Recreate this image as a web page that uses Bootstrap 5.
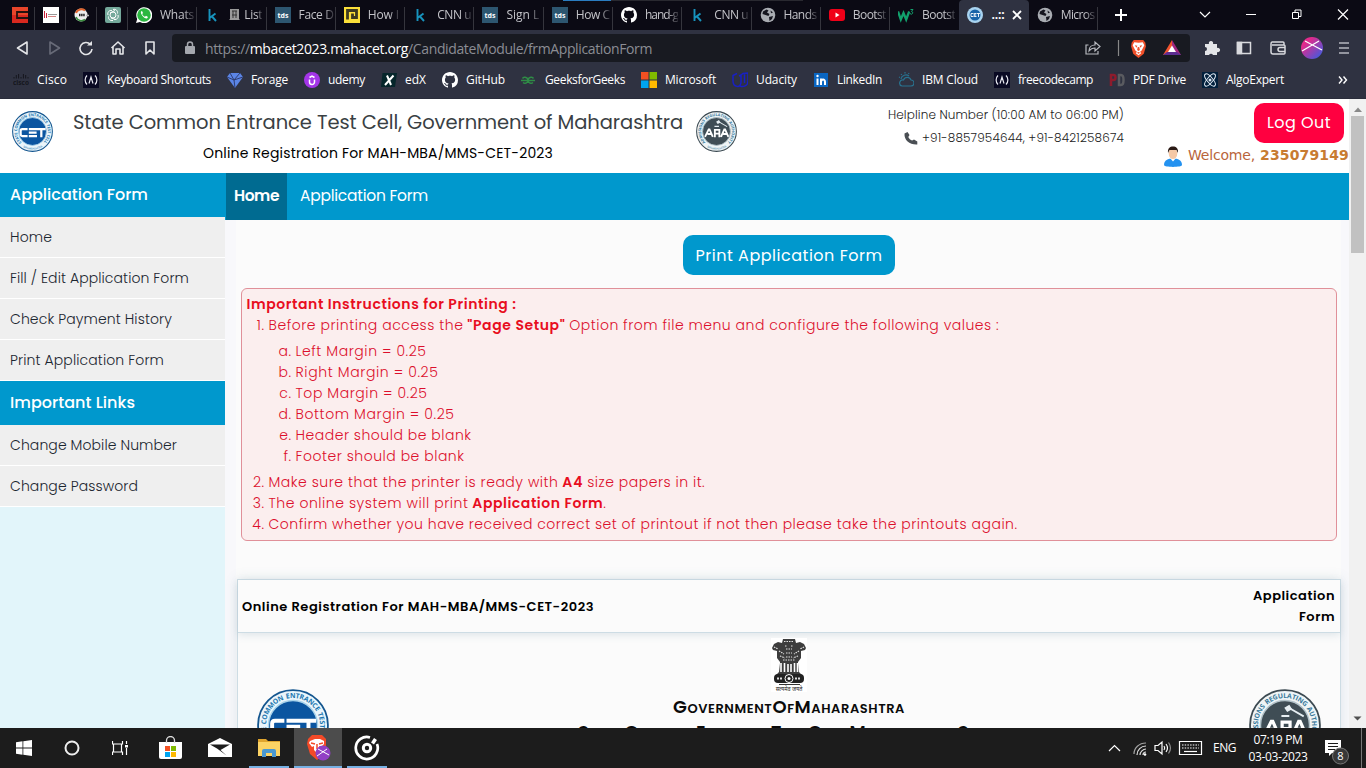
<!DOCTYPE html>
<html lang="en">
<head>
<meta charset="utf-8">
<title>MAH-MBA/MMS-CET-2023</title>
<link href="https://cdn.jsdelivr.net/npm/bootstrap@5.3.0/dist/css/bootstrap.min.css" rel="stylesheet">
<script src="https://cdn.jsdelivr.net/npm/bootstrap@5.3.0/dist/js/bootstrap.bundle.min.js"></script>
<style>
:root{--sky:#0098cd;--pop:Poppins,Inter,"Open Sans",sans-serif;--sys:"Segoe UI","Open Sans","Noto Sans",sans-serif}
body{width:1366px;height:768px;overflow:hidden;font-family:var(--pop);color:#000;background:#fff}
svg{display:block;flex:none}
[data-w]{display:inline-block;white-space:nowrap}
.browser{font-family:var(--sys);color:#fff;font-size:12px;background:#2f3241}
.tabstrip{height:30px;background:#0b0a14;padding-left:4px;position:relative}
.loadbar{position:absolute;top:0;left:563px;width:240px;height:1px;background:linear-gradient(90deg,#2a7cc0 20%,#292930 20%)}
.pin{width:31px;padding:7px 0 0 8px}
.pin,.tab{height:30px;position:relative}
.tab{flex:1 1 0;min-width:0;padding:7px 2px 0 8px;color:#c3c3c8}
.pin::after,.tab::after{content:"";position:absolute;right:0;top:7px;bottom:0;width:1px;background:#35353d}
.tab.on::after,.tab.pre::after{display:none}
.tab span{white-space:nowrap;line-height:16px;-webkit-mask-image:linear-gradient(90deg,#000 70%,rgba(0,0,0,.2) 100%)}
.tab.on{background:#2f3241;border-radius:4px 4px 0 0;color:#fff}
.tab.on span{-webkit-mask-image:none}
.tabs-box{width:1094px}
.toolbar{height:36px;padding:4px 0 4px 15px}
.urlbox{width:1018px;height:28px;background:#181a21;border-radius:4px;font-size:14px;color:#8b8d94;padding:0 9px 0 12px}
.urlbox b{color:#fff;font-weight:400}
.marks{height:32px;padding:0 18px 4px 13px}
.marks .bm{line-height:16px;color:#fff;font-size:12px}
.edge{height:1px;background:#2a2d3b}
.viewport-area{height:629px;overflow:hidden}
.page{width:1349px;height:629px;overflow:hidden}
.rail{width:17px;background:#f1f1f1;padding:6px 2px 5px 2px}
.thumb{height:137px;background:#c1c1c1;width:13px}
.masthead{height:74px;background:#fff}
.ttl{font-size:19.5px;line-height:28px;color:#3a3f44}
.sub{font-size:14px;line-height:22px}
.help{font-size:12px;color:#222;line-height:23px;font-weight:300}
.btn-out{background:#ff0040;color:#fff;border-radius:10px;width:90px;height:40px;font-size:16px;padding:0}
.hello{font-family:Verdana,"DejaVu Sans",sans-serif;font-size:14px;color:#b9653b;line-height:19px;margin-top:3px}
.hello b{color:#c87b31}
.side{width:225px;background:#e2f5fa}
.side h6{height:44px;background:var(--sky);color:#fff;font-size:16px;font-weight:500;margin:0;padding:0 10px}
.side a{height:41px;background:#efefef;border-bottom:1px solid #fff;color:#1b2630;text-decoration:none;font-size:14px;font-weight:300;padding:1px 10px 0}
.topnav{height:47px;background:var(--sky);color:#fff;font-size:15.5px;padding-bottom:1px}
.topnav .cur{width:61px;margin:0 0 -1px 1px;background:#006b91;font-weight:600;padding:0 0 1px 8px}
.pane{background:#f8f8fb;padding:0 8px 0 11px}
.sheet{background:#fbfbfb;height:100%}
.btn-print{background:var(--sky);color:#fff;border-radius:10px;width:212px;height:40px;font-size:16px;padding:2px 0 0 1px}
.notes{margin:13px 4px 0 5px;height:253px;border:1px solid #e09099;border-radius:6px;background:#fbeeee;color:#dc0f2c;font-size:14px;line-height:21px;font-weight:300;padding:4.5px 4.500px}
.notes b{font-weight:600;color:#e80d1e}
.notes ol{margin:0;padding-left:22px}
.notes ol ol{list-style:none;padding-left:27px;margin:5px 0;counter-reset:sub}
.notes>ol{list-style:none;counter-reset:top}
.notes li{position:relative}
.notes li::before{position:absolute;right:100%;margin-right:4px;letter-spacing:.5px}
.notes>ol>li::before{counter-increment:top;content:counter(top) "."}
.notes ol ol li::before{counter-increment:sub;content:counter(sub,lower-alpha) "."}
.formcard{margin:38px 0 0 1px;height:200px;border:1px solid #cddce4;box-shadow:0 0 12px rgba(90,130,150,.16)}
.formhead{height:53px;border-bottom:1px solid #cddce4;box-shadow:0 2px 8px rgba(90,130,150,.18);font-size:13px;font-weight:600;line-height:21px;padding:0 5px 0 4px}
.caps{font-variant:small-caps;font-weight:600;font-size:18px;line-height:24px;color:#0a0a0a}
.taskbar{height:40px;background:#1c1c1c;color:#fff;font-family:var(--sys);font-size:12px}
.task{width:48px;height:40px;border-bottom:2px solid transparent;padding-top:2px}
.task.app{width:49px}
.run-a{width:40px;border-color:#76b0e3}
.live{width:48px;background:#4c4c4c;border-color:#76b0e3;margin:0 5px}
.clock{line-height:17px;width:60px}
</style>
</head>
<body class="d-flex flex-column">
<svg width="0" height="0" class="position-absolute">
<defs>
<symbol id="k" viewBox="0 0 16 16"><path d="M4.500 2V14M10.500 6.500 4.500 11M7 9.500 11 14" fill="none" stroke="#1793bd" stroke-width="1.900"/></symbol>
<symbol id="tds" viewBox="0 0 16 16"><path fill="#2d5670" d="M0 0h16v16H0z"/><text x="8" y="10.500" font-size="7" font-weight="700" fill="#fff" text-anchor="middle" font-family="Open Sans">tds</text></symbol>
<symbol id="gh" viewBox="0 0 16 16"><path fill="#fff" d="M8 0C3.580 0 0 3.580 0 8c0 3.540 2.290 6.530 5.470 7.590.4.070.55-.17.55-.38 0-.19-.01-.82-.01-1.490-2.010.37-2.530-.49-2.690-.94-.09-.23-.48-.94-.82-1.130-.28-.15-.68-.52-.01-.53.63-.01 1.080.58 1.230.82.72 1.210 1.870.87 2.330.66.07-.52.28-.87.51-1.070-1.780-.2-3.640-.89-3.640-3.950 0-.87.31-1.590.82-2.150-.08-.2-.36-1.020.08-2.120 0 0 .67-.21 2.200.82.64-.18 1.320-.27 2-.27s1.360.09 2 .27c1.530-1.040 2.200-.82 2.200-.82.44 1.100.16 1.920.08 2.120.51.56.82 1.270.82 2.150 0 3.070-1.870 3.750-3.650 3.950.29.25.54.73.54 1.480 0 1.070-.01 1.930-.01 2.200 0 .21.15.46.55.38A8.010 8.010 0 0 0 16 8c0-4.420-3.580-8-8-8"/></symbol>
<symbol id="globe" viewBox="0 0 16 16"><circle cx="8" cy="8" r="7.300" fill="#a9acb2"/><path fill="#15151f" d="M3 4.500 6.500 2.500l2 1-1.500 2 2.500 1.500-1 2-3-1L2.500 7zM9 10l4-1-1 3-2.500 2zM10.500 3.500l2.500 2-2 .8z"/></symbol>
<symbol id="fcc" viewBox="0 0 16 16"><path fill="#0a0a23" d="M0 0h16v16H0z"/><path d="M4 3.500C1.500 6 1.500 10 4 12.500M12 3.500c2.500 2.500 2.500 6.500 0 9M6 11.500 8 5l2 6.500" fill="none" stroke="#e8e8f0" stroke-width="1.200"/></symbol>
<symbol id="brave" viewBox="0 0 16 18"><path fill="#f0512b" d="M3.500 1h9L14.500 3.500 15 7l-2 7-5 4-5-4L1 7l.5-3.500z"/><path fill="#fff" d="M8 3.500 12 3l1.500 3L11 11l-1.500 1 1 1.500L8 15.500 5.500 13.500l1-1.500L5 11 2.500 6 4 3z"/><path fill="#f0512b" d="M4.500 6 7 6.500l-1 1.800zM11.500 6 9 6.500l1 1.800zM7.300 7.500h1.400l.6 3L8 11.300l-1.300-.8zM6.500 13 8 12.200 9.500 13 8 14z"/></symbol>
<symbol id="cet" viewBox="0 0 100 100"><circle cx="50" cy="50" r="48.500" fill="#eaf5fb" stroke="#14568f" stroke-width="2.500"/><circle cx="50" cy="50" r="34" fill="#0b55a0" stroke="#a9d3ea" stroke-width="2"/><path id="ringc" d="M23.500 76.500A37.500 37.500 0 1 1 76.500 76.500" fill="none"/><text font-family="Open Sans" font-size="9.500" font-weight="700" fill="#1c77b0" word-spacing="1"><textPath href="#ringc" textLength="176">STATE COMMON ENTRANCE TEST CELL</textPath></text><path id="ringd" d="M25 87A44.500 44.500 0 0 0 75 87" fill="none"/><text font-family="Open Sans" font-size="7" fill="#1c77b0"><textPath href="#ringd" startOffset="2">MAHARASHTRA</textPath></text><path d="M38 44H25q-4 0-4 4v9q0 4 4 4h13M61 44H41M60 52.500H41M61 61H41M61 44h21M71.500 44v20" fill="none" stroke="#fff" stroke-width="5.500"/></symbol>
<symbol id="ara" viewBox="0 0 100 100"><circle cx="50" cy="50" r="48.500" fill="#eef4f6" stroke="#3c4a52" stroke-width="2.500"/><circle cx="50" cy="50" r="34" fill="#3f4d55" stroke="#b3c3ca" stroke-width="2"/><path id="ringa" d="M23.500 76.500A37.500 37.500 0 1 1 76.500 76.500" fill="none"/><text font-family="Open Sans" font-size="9.500" font-weight="700" fill="#38789a" word-spacing="1"><textPath href="#ringa" textLength="176">ADMISSIONS REGULATING AUTHORITY</textPath></text><path id="ringb" d="M25 87A44.500 44.500 0 0 0 75 87" fill="none"/><text font-family="Open Sans" font-size="7" fill="#38789a"><textPath href="#ringb" startOffset="2">MAHARASHTRA</textPath></text><path d="m22 63 9-18h2l8 18M28 56h9M46 64V46h11v9H46M57 55v9M61 63l8-18h2l8 18M66 56h9" fill="none" stroke="#fff" stroke-width="4.500"/><path d="M45 39h11v-3H45z M49 26l7-4 4 6-7 4z" fill="#e6eef2"/><path d="m57 27 19 11" stroke="#e6eef2" stroke-width="2.500"/></symbol>
</defs></svg>

<header class="browser flex-shrink-0">
<div class="tabstrip d-flex">
<div class="loadbar"></div>
<div class="tabs-box d-flex">
<div class="pin"><svg width="16" height="16"><path fill="#e8452a" d="M0 0h16v8H0z"/><path fill="#d8281f" d="M0 8h16v8H0z"/><path fill="none" stroke="#26130f" stroke-width="1.800" d="M16 5H5v6h11"/><path d="M7 8h9" stroke="#26130f" stroke-width="0"/></svg></div>
<div class="pin"><svg width="16" height="16"><path fill="#fff" d="M0 0h16v16H0z"/><path stroke="#c8203a" d="M1.500 4v7M3.500 6v5"/><path stroke="#999" d="M5 7.500h9"/><path stroke="#c66" stroke-width=".8" d="M5 9.500h8"/></svg></div>
<div class="pin"><svg width="16" height="16"><circle cx="7" cy="8" r="6.500" fill="#eee"/><path d="M11 3.500A5.800 5.800 0 0 0 2 6" fill="none" stroke="#e0642c" stroke-width="2"/><path d="M2 10a5.800 5.800 0 0 0 9 2.500" fill="none" stroke="#3a8c3e" stroke-width="1.600"/><path d="M5 8h6" stroke="#222" stroke-width="2.500" stroke-dasharray="1.500 .6"/><path d="M12 8.500h3" stroke="#bbb" stroke-width="1.500"/></svg></div>
<div class="pin"><svg width="16" height="16"><rect width="16" height="16" rx="2" fill="#74a99b"/><g fill="none" stroke="#fff"><circle cx="8" cy="8" r="3"/><path d="M8 2.500c3-1 5 1.500 4.500 4M13 8c1 3-1.500 5-4 4.500M8 13.500c-3 .5-5-1.500-4.500-4M3 8C2 5 4.500 3 7 3.500M5 6l5-2.500M6 11l5 1.500"/></g></svg></div>
<div class="tab d-flex gap-2"><svg width="16" height="16"><path d="M0 16 1.200 12A8 8 0 1 1 4 15z" fill="#fff"/><circle cx="8" cy="8" r="6.800" fill="#2bb741"/><path d="M5 4.500c-1 2 3 7.500 6 7l1-1.500-2-1.200-1 1C7.500 9 6.500 8 6.200 7L7 6 6 4z" fill="#fff"/></svg><span data-w="34">Whats</span></div>
<div class="tab d-flex gap-2"><svg width="16" height="16"><use href="#k"/></svg><svg width="11" height="16"><path fill="#9a9a9a" d="M1 2h9v10l1 1H0l1-1z"/><path stroke="#333" d="M3 4h5M3 8h5M4 4v7M7 4v7" fill="none"/></svg><span data-w="18" style="margin-left:-4px">List</span></div>
<div class="tab d-flex gap-2"><svg width="16" height="16"><use href="#tds"/></svg><span data-w="35">Face D</span></div>
<div class="tab d-flex gap-2"><svg width="16" height="16"><path fill="#fbdf39" d="M0 0h16v16H0z"/><path fill="none" stroke="#3c3a20" stroke-width="2.800" d="M3.500 12.500v-9h9v7h-4v-4"/></svg><span data-w="31">How I</span></div>
<div class="tab d-flex gap-2"><svg width="16" height="16"><use href="#k"/></svg><span data-w="34">CNN u</span></div>
<div class="tab d-flex gap-2"><svg width="16" height="16"><use href="#tds"/></svg><span data-w="33">Sign L</span></div>
<div class="tab d-flex gap-2"><svg width="16" height="16"><use href="#tds"/></svg><span data-w="34">How C</span></div>
<div class="tab d-flex gap-2"><svg width="16" height="16"><use href="#gh"/></svg><span data-w="33">hand-g</span></div>
<div class="tab d-flex gap-2"><svg width="16" height="16"><use href="#k"/></svg><span data-w="34">CNN u</span></div>
<div class="tab d-flex gap-2"><svg width="16" height="16"><use href="#globe"/></svg><span data-w="33">Hands</span></div>
<div class="tab d-flex gap-2"><svg width="16" height="16"><rect y="2" width="16" height="12" rx="3" fill="#f00018"/><path fill="#fff" d="m6.500 5.500 4 2.500-4 2.500z"/></svg><span data-w="33">Bootst</span></div>
<div class="tab pre d-flex gap-2"><svg width="16" height="16"><path d="m0 4.500 2.800 8L5.500 6l2.700 6.500 3-8" fill="none" stroke="#12a06c" stroke-width="2.300"/><path d="M12.500 2.500h2.500l-1.500 2q2 .5 1 2t-2.500 0" stroke="#12a06c" fill="none"/></svg><span data-w="33">Bootst</span></div>
<div class="tab on d-flex gap-2"><svg width="16" height="16"><circle cx="8" cy="8" r="8" fill="#a9d4f0"/><circle cx="8" cy="8" r="5.500" fill="#1763a8"/><path d="M6.500 6.500H4v3h2.500M9.500 6.500H7.200v3h2.300M7.200 8h2M10 6.500h3M11.500 6.500v3.500" stroke="#fff" stroke-width=".9" fill="none"/></svg><span class="fw-bold" data-w="13">..::</span><svg width="10" height="16"><path d="m1 4 8 8M9 4l-8 8" stroke="#fff" stroke-width="1.800"/></svg></div>
<div class="tab d-flex gap-2"><svg width="16" height="16"><use href="#globe"/></svg><span data-w="34">Micros</span></div>
</div>
<div class="d-flex align-items-center ms-3" style="height:30px">
<svg width="252" height="30" fill="none" stroke="#fff"><path d="M1 15h12M7 9v12" stroke-width="2"/><path d="m86 12 5 5 5-5" stroke-width="1.200"/><path d="M132 14.500h10M178.500 12.500h6v6h-6zM181 12.500v-2.500h6v6.500h-2.500" /><path d="m224 9.500 10 10M234 9.500l-10 10" stroke-width="1.200"/></svg>
</div>
</div>

<div class="toolbar d-flex align-items-center">
<svg width="157" height="28" fill="none" stroke="#e4e5e8" stroke-width="1.600" stroke-linejoin="round"><path d="M12 8 2.500 14l9.500 6z"/><path d="m35 8 9.500 6-9.500 6z" stroke="#686b78"/><path d="M75.500 10.500A6 6 0 1 0 77 15"/><path d="M72 11.500h5V7z" fill="#e4e5e8" stroke="none"/><path d="m96.500 14 6.500-6 6.500 6M98 13v7h3v-5h4v5h3v-7M131 8h8v12l-4-4-4 4z"/></svg>
<div class="urlbox d-flex align-items-center">
<svg width="12" height="16" fill="#a5a8ae"><rect x="1" y="6" width="10" height="8" rx="1"/><path d="M3.500 7V4.500a2.500 2.500 0 0 1 5 0V7" fill="none" stroke="#a5a8ae" stroke-width="1.500"/></svg>
<div class="flex-grow-1" style="margin-left:9px"><span data-w="447">https://<b>mbacet2023.mahacet.org</b>/CandidateModule/frmApplicationForm</span></div>
<svg width="46" height="20" fill="none" stroke="#b7b9bf" stroke-width="1.200"><path d="M4.500 7H2v9h12v-3M5 13c0-4 3-6 6-6V4l5 4.500L11 13v-3c-3 0-4.500 1-6 3z"/><path d="M34.500 2v16" stroke="#888"/></svg>
<svg width="17" height="19"><use href="#brave"/></svg>
<svg width="18" height="16" class="ms-3"><path fill="#f0532d" d="M9 0 0 15h4.500L9 7z"/><path fill="#a0267f" d="m9 0 9 15h-4.500L9 7z"/><path fill="#5c2d91" d="M0 15h18l-4-3H4z"/><path fill="#fff" d="m9 5.500-4 6.500h8z"/></svg>
</div>
<svg width="170" height="28" fill="none" stroke="#d9dade" stroke-width="1.500"><path fill="#e4e5e8" stroke="none" d="M15 10h4a2.200 2.200 0 1 1 4 0h4v4a2.200 2.200 0 1 1 0 4v3h-4a2.200 2.200 0 0 0-4 0h-4v-4a2 2 0 0 0 0-4z"/><path d="M47.500 8.500h13v11h-13z"/><path d="M47.500 8.500h4v11h-4z" fill="#d9dade"/><path d="M94 11V9q0-1-1-1H82q-1 0-1 2v8q0 2 2 2h11q1 0 1-1v-7q0-1-1-1H82M95 13.500h-5q-2 0-2 2t2 2h5"/><g stroke-width="1.700"><path d="M149 9h10M149 14h10M149 19h10" stroke="#b5b7bf"/></g><defs><linearGradient id="av" x1="0" x2="1" y1="0" y2="1"><stop offset=".25" stop-color="#e22a8c"/><stop offset=".85" stop-color="#4f56d8"/></linearGradient></defs><circle cx="122" cy="14" r="11" fill="url(#av)" stroke="none"/><path d="m112 17 17-10M115 7l17 9" stroke="#fff" stroke-width="1.200"/></svg>
</div>

<div class="marks d-flex align-items-center gap-3">
<div class="bm d-flex gap-2"><svg width="16" height="16"><path d="M1 5v1.500M3.300 3v3.500M5.600 2v4.500M8 5v1.500M10.400 2v4.500M12.700 3v3.500M15 5v1.500" stroke="#15161d"/><text x="0" y="13" font-size="6.500" font-weight="700" fill="#15161d">cisco</text></svg><span data-w="30">Cisco</span></div>
<div class="bm d-flex gap-2"><svg width="16" height="16"><use href="#fcc"/></svg><span data-w="104">Keyboard Shortcuts</span></div>
<div class="bm d-flex gap-2"><svg width="16" height="16"><path fill="#5b85e6" d="M3 1h10l3 4-8 11L0 5z"/><path d="M0 5 7 8l9-3M7 8l1 8M3 1l4 7 6-7" stroke="#2f3d70" fill="none"/></svg><span data-w="37">Forage</span></div>
<div class="bm d-flex gap-2"><svg width="16" height="16"><circle cx="8" cy="8" r="8" fill="#a435e8"/><path d="M5.500 7.500V10a2.500 2.500 0 0 0 5 0V7.500M5.500 5.500 8 4l2.500 1.500" fill="none" stroke="#fff" stroke-width="1.500"/></svg><span data-w="37">udemy</span></div>
<div class="bm d-flex gap-2"><svg width="16" height="16"><path fill="#06262b" d="M1.500 1H16l-2 14H0z"/><path d="M6 3.500 10 13M12.500 3.500 4 13" stroke="#fff" stroke-width="2"/></svg><span data-w="21">edX</span></div>
<div class="bm d-flex gap-2"><svg width="16" height="16"><use href="#gh"/></svg><span data-w="39">GitHub</span></div>
<div class="bm d-flex gap-2"><svg width="16" height="16" fill="none" stroke="#2f8d46" stroke-width="1.500"><path d="M1.500 6.500A3 3 0 1 1 2 10.500M0 8.500h14M12.500 6.500a3 3 0 1 0-.5 4M7 6v5"/></svg><span data-w="80">GeeksforGeeks</span></div>
<div class="bm d-flex gap-2"><svg width="16" height="16"><path fill="#f25022" d="M0 0h7.500v7.500H0z"/><path fill="#7fba00" d="M8.500 0H16v7.500H8.500z"/><path fill="#00a4ef" d="M0 8.500h7.500V16H0z"/><path fill="#ffb900" d="M8.500 8.500H16V16H8.500z"/></svg><span data-w="51">Microsoft</span></div>
<div class="bm d-flex gap-2"><svg width="16" height="16" fill="none" stroke="#1820c4" stroke-width="1.500"><path d="M5 1.500 1 3.500V9c0 6 8 8 8 1V3L7 4M9 3l2-1.500L16 1v8c0 5-5 6.500-8 5M12.500 2v9"/></svg><span data-w="41">Udacity</span></div>
<div class="bm d-flex gap-2"><svg width="16" height="16"><path fill="#0a66c2" d="M1 1h14v14H1z"/><path d="M4.500 6.500V13M8 13V6.500M8 10c0-3 4-3.500 4 0v3" stroke="#fff" stroke-width="2" fill="none"/><circle cx="4.500" cy="4" r="1.200" fill="#fff"/></svg><span data-w="45">LinkedIn</span></div>
<div class="bm d-flex gap-2"><svg width="16" height="16" fill="none" stroke="#28728f" stroke-width="1.200"><path d="M4 14h9a3 3 0 0 0 0-6 4 4 0 0 0-7.500 0A3 3 0 0 0 4 14M3 7a5 5 0 0 1 8-3M1 5l1 .5M3 2l.8 1M7 0v1.500M11 1l-.5 1"/></svg><span data-w="56">IBM Cloud</span></div>
<div class="bm d-flex gap-2"><svg width="16" height="16"><use href="#fcc"/></svg><span data-w="75">freecodecamp</span></div>
<div class="bm d-flex gap-2"><svg width="16" height="16" fill="none" stroke-width="2.500"><path d="M2 14V3h2.500q2 0 2 2.500T4.500 8H2" stroke="#8e1b2c"/><path d="M10 3h2q2.500 0 2.500 5t-2.500 5h-2z" stroke="#5a5b60"/></svg><span data-w="53">PDF Drive</span></div>
<div class="bm d-flex gap-2"><svg width="16" height="16"><path fill="#02203c" d="M0 0h16v16H0z"/><g fill="none" stroke="#dfe8f2"><ellipse cx="8" cy="8" rx="7.500" ry="2.800" transform="rotate(50 8 8)"/><ellipse cx="8" cy="8" rx="7.500" ry="2.800" transform="rotate(-50 8 8)"/></g><circle cx="8" cy="8" r="1.500" fill="#dfe8f2"/></svg><span data-w="58">AlgoExpert</span></div>
<svg width="10" height="10" class="ms-auto" fill="none" stroke="#fff" stroke-width="1.400"><path d="m1 1.500 3 3.500-3 3.500M5.500 1.500l3 3.500-3 3.500"/></svg>
</div>
<div class="edge"></div>
</header>

<div class="viewport-area d-flex flex-shrink-0">
<main class="page d-flex flex-column">
<div class="masthead d-flex flex-shrink-0">
<svg width="41" height="41" style="margin:12px 20px 0 12px"><use href="#cet"/></svg>
<div class="text-center" style="width:610px;padding-top:10px"><div class="ttl"><span data-w="610">State Common Entrance Test Cell, Government of Maharashtra</span></div><div class="sub" style="margin-top:5px"><span data-w="350">Online Registration For MAH-MBA/MMS-CET-2023</span></div></div>
<svg width="41" height="41" style="margin:12px 0 0 13px"><use href="#ara"/></svg>
<div class="help text-end ms-auto pt-1"><div><span data-w="236">Helpline Number (10:00 AM to 06:00 PM)</span></div><div class="d-flex justify-content-end align-items-center"><svg width="14" height="14" class="me-1"><path fill="#4a4f54" d="M.5 2.500 3.500 1l2 3L4.300 6c.8 1.600 2.200 2.900 3.800 3.600L10 8.600l3.300 2V13.500C6 14 0 9.500.5 2.500z"/></svg><span data-w="202">+91-8857954644, +91-8421258674</span></div></div>
<div class="d-flex flex-column align-items-end" style="width:225px;padding-top:4px"><button class="btn btn-out" style="margin-right:5px"><span data-w="64">Log Out</span></button>
<div class="hello d-flex"><svg width="20" height="22" style="margin-right:5px"><path fill="#2492f0" d="M1 19c0-5 4-6.500 9-6.500s9 1.500 9 6.500c0 2.500-18 2.500-18 0z"/><path fill="#fff" d="m7 12 3 3.500 3-3.500z"/><ellipse cx="10" cy="7.500" rx="4.300" ry="5.500" fill="#f5c8a6"/><path fill="#2b1b16" d="M5 7C4.500 2 7 .5 10 .5S15.500 2 15 7l-1.500-3h-7z"/></svg><span data-w="67" style="margin-right:5px">Welcome,</span><b data-w="89">235079149</b></div></div>
</div>
<div class="d-flex flex-grow-1">
<aside class="side d-flex flex-column flex-shrink-0">
<h6 class="d-flex align-items-center"><span data-w="138">Application Form</span></h6>
<a href="#" class="d-flex align-items-center"><span data-w="42">Home</span></a>
<a href="#" class="d-flex align-items-center"><span data-w="179">Fill / Edit Application Form</span></a>
<a href="#" class="d-flex align-items-center"><span data-w="162">Check Payment History</span></a>
<a href="#" class="d-flex align-items-center"><span data-w="154">Print Application Form</span></a>
<h6 class="d-flex align-items-center"><span data-w="125">Important Links</span></h6>
<a href="#" class="d-flex align-items-center"><span data-w="167">Change Mobile Number</span></a>
<a href="#" class="d-flex align-items-center"><span data-w="128">Change Password</span></a>
</aside>
<section class="flex-grow-1 d-flex flex-column">
<nav class="topnav d-flex flex-shrink-0"><div class="cur d-flex align-items-center"><span data-w="45">Home</span></div><div class="d-flex align-items-center ps-1" style="margin-left:9px"><span data-w="128">Application Form</span></div></nav>
<div class="pane flex-grow-1"><div class="sheet">
<div class="text-center" style="padding-top:15px"><button class="btn btn-print d-block mx-auto"><span data-w="187">Print Application Form</span></button></div>
<div class="notes"><b data-w="270">Important Instructions for Printing :</b>
<ol><li><span data-w="195">Before printing access the</span> <b data-w="98">"Page Setup"</b> <span data-w="430">Option from file menu and configure the following values :</span>
<ol><li><span data-w="131">Left Margin = 0.25</span></li><li><span data-w="143">Right Margin = 0.25</span></li><li><span data-w="132">Top Margin = 0.25</span></li><li><span data-w="159">Bottom Margin = 0.25</span></li><li><span data-w="176">Header should be blank</span></li><li><span data-w="169">Footer should be blank</span></li></ol></li>
<li><span data-w="290">Make sure that the printer is ready with</span> <b data-w="21">A4</b> <span data-w="118">size papers in it.</span></li>
<li><span data-w="200">The online system will print</span> <b data-w="131">Application Form</b>.</li>
<li><span data-w="749">Confirm whether you have received correct set of printout if not then please take the printouts again.</span></li></ol></div>
<div class="formcard"><div class="formhead d-flex justify-content-between align-items-center"><span data-w="352">Online Registration For MAH-MBA/MMS-CET-2023</span><div class="text-end"><span data-w="82">Application</span><br><span data-w="36">Form</span></div></div>
<div class="d-flex justify-content-between" style="padding:0 19px">
<svg width="72" height="72" style="margin-top:56px"><use href="#cet"/></svg>
<div class="text-center" style="padding-top:5px">
<svg width="36" height="54" viewBox="0 0 36 54" class="mx-auto"><path fill="#fff" d="M0 0h36v54H0z"/><path fill="#3d3d3d" d="M12 1h12l1 4 4-1 4 2 2 4-1 2-4 1v7l-3 4v1l1 9 3 3H5l3-3 1-9v-1l-3-4v-7l-4-1-1-2 2-4 4-2 4 1z"/><path d="M13 3.500h10M14 8h2M20 8h2M15 11h6M3 9l4 2M33 9l-4 2M8 13l5 3M28 13l-5 3M9 18l5 2M27 18l-5 2M15 15h6M15 19h6M12 22h12" stroke="#e2e2e2" stroke-width="1.200" stroke-dasharray="1.500 1"/><path d="M10 25v9M13.500 25v9M17 26v8M20 26v8M23.500 25v9M26.500 25v9" stroke="#fff" stroke-width="1.600"/><rect x="3" y="36" width="30" height="9" rx="4" fill="#222"/><circle cx="18" cy="40.500" r="4" fill="#222" stroke="#fff"/><circle cx="18" cy="40.500" r="1.500" fill="#fff"/><path d="M6 40.500h6M24 40.500h6" stroke="#ddd" stroke-width="2" stroke-dasharray="2 1"/><path d="M8 46.500h21" stroke="#333"/><text x="18" y="53" font-size="5.500" fill="#222" text-anchor="middle" font-family="Noto Sans Devanagari,Noto Sans">सत्यमेव जयते</text></svg>
<div class="caps" style="margin-top:3px"><span data-w="232">GovernmentOfMaharashtra</span></div>
<div class="caps" style="margin-top:1px"><span data-w="422">State Common Entrance Test Cell, Maharashtra State</span></div>
</div>
<svg width="72" height="72" style="margin-top:56px"><use href="#ara"/></svg>
</div></div>
</div></div>
</section>
</div>
</main>
<div class="rail d-flex flex-column"><svg width="13" height="11"><path fill="#8a8a8a" d="m3 7 4-4.500L11 7z"/></svg><div class="thumb"></div><svg width="13" height="8" class="mt-auto"><path fill="#505050" d="m2.500 1.500 4 4 4-4z"/></svg></div>
</div>

<footer class="taskbar d-flex flex-shrink-0">
<div class="task d-flex align-items-center justify-content-center"><svg width="16" height="16" fill="#fff"><path d="M0 2.200 6.500 1.300v6.300H0zM7.300 1.200 16 0v7.600H7.300zM0 8.400h6.500v6.300L0 13.800zM7.300 8.400H16V16l-8.700-1.200z"/></svg></div>
<div class="task d-flex align-items-center justify-content-center"><svg width="16" height="16"><circle cx="8" cy="8" r="6.500" fill="none" stroke="#eee" stroke-width="2"/></svg></div>
<div class="task d-flex align-items-center justify-content-center"><svg width="16" height="16" fill="none" stroke="#fff" stroke-width="1.200"><path d="M.5 1v3h10V1M.5 15v-3h10v3M1.500 4v8M9.500 4v8M14.500 1v3M14.500 8v7"/><path d="M13 5h3v2.500h-3z" fill="#fff" stroke="none"/></svg></div>
<div class="task app d-flex align-items-center justify-content-center" style="margin-left:2px"><svg width="23" height="24"><path fill="#fff" d="M0 6h23v15q0 2-2 2H2q-2 0-2-2z"/><path d="M7.500 7V4.500a4 4 0 0 1 8 0V7" fill="none" stroke="#ddd" stroke-width="1.300"/><path fill="#f25022" d="M6 10h5v5H6z"/><path fill="#7fba00" d="M12 10h5v5h-5z"/><path fill="#00a4ef" d="M6 16h5v5H6z"/><path fill="#ffb900" d="M12 16h5v5h-5z"/></svg></div>
<div class="task app d-flex align-items-center justify-content-center"><svg width="24" height="20" fill="#fff"><path d="M0 6 12 0l12 6v13H0z"/><path d="M2 6.500h20L12.500 12l6 5.500L9 10.500z" fill="#1c1c1c"/></svg></div>
<div class="task run-a d-flex align-items-center justify-content-center" style="margin-left:5px"><svg width="22" height="20"><path fill="#e0a52e" d="M0 1h8l2 2h12v4H0z"/><path fill="#fcd364" d="M0 4h22v14H0z"/><path fill="#4a98d0" d="M4 19v-6q0-2 2-2h10q2 0 2 2v6h-4v-4H8v4z"/></svg></div>
<div class="task live d-flex align-items-center justify-content-center"><svg width="26" height="26" viewBox="0 0 26 26"><path fill="#f44a28" d="M7 0h10l4 4v9l-3 7-6 5-7-6L2 9l1-5z"/><path fill="#fff" d="m5 6 5-2h5l4 2v3l-3 3-2-1v5l-2 2-3-3v-4l-2 1-3-4z"/><path d="m6 8 4 1M18 8l-4 1M12 9v5" stroke="#f44a28" stroke-width="1.500"/><circle cx="18" cy="18" r="7.500" fill="#923fc5"/><path d="m12 21 10-7M13 14l11 6" stroke="#fff" stroke-width="1"/></svg></div>
<div class="task run-a d-flex align-items-center justify-content-center"><svg width="26" height="26" fill="none" stroke="#fff"><path d="M16 2.500A11 11 0 1 0 23 9" stroke-width="2.700"/><circle cx="13" cy="13" r="3.700" stroke-width="3"/><path d="m18.500 8.500 3-4.500" stroke-width="3.500"/></svg></div>
<div class="d-flex align-items-center ms-auto">
<svg width="104" height="24" fill="none" stroke="#fff" stroke-width="1.200"><path d="m5 15 5.500-5.500L16 15"/><g stroke="#ddd"><path d="M30 18C30 12 35 7 42 7" opacity=".7"/><path d="M33 19c0-5 4-9 9-9M36 19c0-3 3-6 6-6M39 19c0-2 1-3 3-3"/></g><circle cx="41" cy="18.500" r="1.300" fill="#fff" stroke="none"/><path d="M51 9.500h3l4-3.500v12l-4-3.500h-3zM60 10q1.500 2 0 4M62 8q3 4 0 8"/><path d="M64.500 6.500q4 5.500 0 11" opacity=".5"/><path d="M75.500 5.500h22v13h-22z"/><path d="M78 9h17M78 12h17" stroke-dasharray="1.500 1.200"/><path d="M80 15.500h13"/></svg>
<span data-w="23" style="margin-left:5px">ENG</span>
<div class="clock text-center d-flex flex-column align-items-center" style="margin-left:12px"><span data-w="49">07:19 PM</span><span data-w="59">03-03-2023</span></div>
<svg width="58" height="40"><path fill="#fff" d="M17 12h16v13h-9l-3 3v-3h-4z"/><path d="M20 15.500h10M20 18.500h10M20 21.500h7" stroke="#1c1c1c"/><circle cx="32.500" cy="28" r="8" fill="#383838" stroke="#777"/><text x="32.500" y="32" font-size="11" fill="#fff" text-anchor="middle" font-family="Open Sans">8</text><path d="M53.500 0v40" stroke="#777"/></svg>
</div>
</footer>
<script>
// Track each label out or in to its column width.
document.querySelectorAll('[data-w]').forEach(function (el) {
  var w = +el.dataset.w, n = el.textContent.length;
  el.style.letterSpacing = ((w - el.getBoundingClientRect().width) / n) + 'px';
  el.style.width = w + 'px';
});
</script>
</body>
</html>
